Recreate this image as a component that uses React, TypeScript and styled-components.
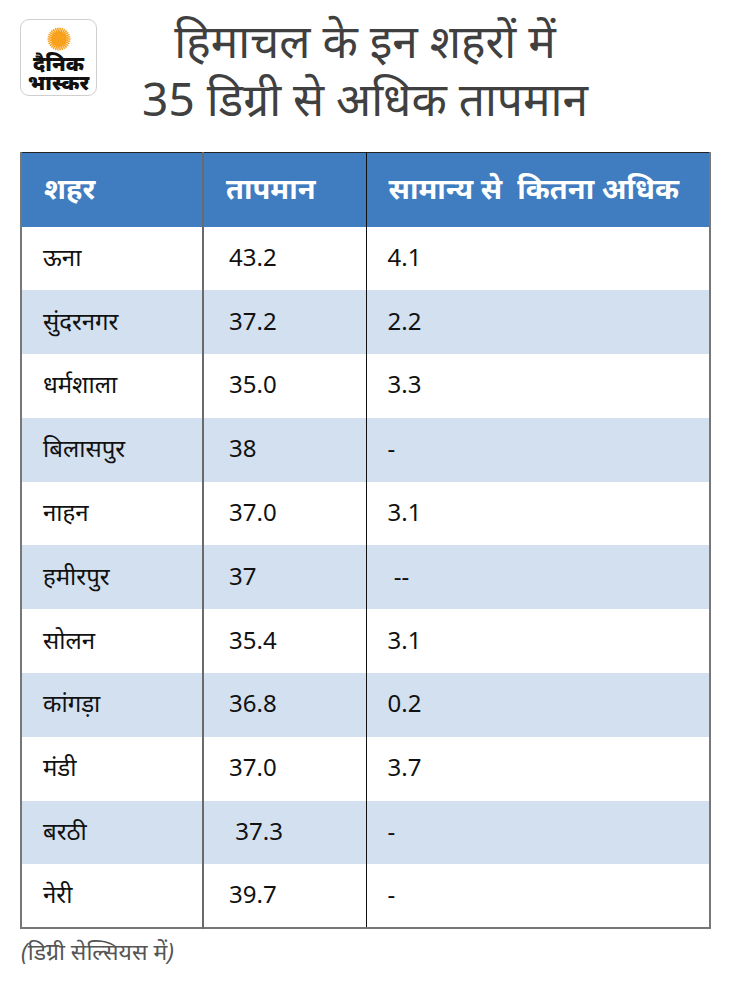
import React from "react";
import styled, { createGlobalStyle } from "styled-components";

const Global = createGlobalStyle`
  html, body { margin: 0; padding: 0; background: #ffffff; }
  body { width: 730px; font-family: "Noto Sans", "Noto Sans Devanagari", "Lohit Devanagari", sans-serif; }
`;

const Page = styled.div`
  width: 730px;
  height: 981px;
  background: #fff;
  overflow: hidden;
`;

const Header = styled.header`
  display: grid;
  grid-template-columns: 1fr auto 1fr;
  align-items: start;
  height: 152px;
  box-sizing: border-box;
`;

const LogoBox = styled.div`
  margin: 19px 0 0 20px;
  width: 77px;
  height: 77px;
  box-sizing: border-box;
  border: 1px solid #cfcfcf;
  border-radius: 9px;
  display: flex;
  flex-direction: column;
  align-items: center;
  padding-top: 7px;
`;

const LogoText = styled.div`
  font-weight: 900;
  font-size: 21px;
  color: #111;
  text-align: center;
  margin-top: 2px;
  display: flex;
  flex-direction: column;
  align-items: center;
`;

const LogoLine = styled.span<{ $small?: boolean }>`
  display: block;
  line-height: ${(p) => (p.$small ? 18 : 20)}px;
`;

const Title = styled.h1`
  margin: 11px 0 0;
  font-weight: 400;
  font-size: 46px;
  line-height: 58px;
  color: #404040;
  text-align: center;
  white-space: nowrap;
`;

const Table = styled.table`
  margin-left: 20px;
  width: 689px;
  border-collapse: collapse;
  table-layout: fixed;
  border-top: 1.5px solid #222;
  border-left: 2px solid #777;
  border-right: 2px solid #777;
  border-bottom: 2px solid #777;
`;

const HeadCell = styled.th<{ $w: number; $div?: string }>`
  width: ${(p) => p.$w}px;
  height: 74px;
  background: #3f7cc0;
  color: #fff;
  font-weight: 700;
  font-size: 29px;
  text-align: left;
  padding: 0 0 4px 22px;
  box-sizing: border-box;
  white-space: pre;
  border-right: ${(p) => p.$div ?? "none"};
`;

const Row = styled.tr<{ $alt: boolean }>`
  height: 63.8px;
  background: ${(p) => (p.$alt ? "#d3e0ef" : "#ffffff")};
`;

const Cell = styled.td<{ $div?: string; $pad?: number }>`
  font-size: 24px;
  color: #111;
  padding: 0 0 4px ${(p) => p.$pad ?? 21}px;
  border-right: ${(p) => p.$div ?? "none"};
  white-space: pre;
`;

const Note = styled.div`
  margin: 6px 0 0 21px;
  font-size: 23px;
  font-style: italic;
  color: #555;
`;

const rows: [string, string, string][] = [
  ["ऊना", "43.2", "4.1"],
  ["सुंदरनगर", "37.2", "2.2"],
  ["धर्मशाला", "35.0", "3.3"],
  ["बिलासपुर", "38", "-"],
  ["नाहन", "37.0", "3.1"],
  ["हमीरपुर", "37", " --"],
  ["सोलन", "35.4", "3.1"],
  ["कांगड़ा", "36.8", "0.2"],
  ["मंडी", "37.0", "3.7"],
  ["बरठी", " 37.3", "-"],
  ["नेरी", "39.7", "-"],
];

const Sun = () => {
  const rays = Array.from({ length: 30 }, (_, i) => {
    const a = (i / 30) * Math.PI * 2;
    const x1 = 12 + Math.cos(a) * 6;
    const y1 = 12 + Math.sin(a) * 6;
    const x2 = 12 + Math.cos(a) * 11.5;
    const y2 = 12 + Math.sin(a) * 11.5;
    return <line key={i} x1={x1} y1={y1} x2={x2} y2={y2} stroke="#f7a11c" strokeWidth={1.5} />;
  });
  return (
    <svg width="24" height="24" viewBox="0 0 24 24">
      <circle cx="12" cy="12" r="7.5" fill="#f7a11c" />
      {rays}
    </svg>
  );
};

export default function App() {
  const D1 = "2px solid #6a6a6a";
  const D2 = "1.5px solid #111";
  return (
    <Page>
      <Global />
      <Header>
        <div>
          <LogoBox>
            <Sun />
            <LogoText>
              <LogoLine>दैनिक</LogoLine>
              <LogoLine $small>भास्कर</LogoLine>
            </LogoText>
          </LogoBox>
        </div>
        <Title>
          हिमाचल के इन शहरों में
          <br />
          35 डिग्री से अधिक तापमान
        </Title>
        <div />
      </Header>
      <Table>
        <thead>
          <tr>
            <HeadCell $w={182} $div={D1}>शहर</HeadCell>
            <HeadCell $w={163} $div={D2}>तापमान</HeadCell>
            <HeadCell $w={344}>सामान्य से  कितना अधिक</HeadCell>
          </tr>
        </thead>
        <tbody>
          {rows.map((r, i) => (
            <Row key={i} $alt={i % 2 === 1}>
              <Cell $div={D1}>{r[0]}</Cell>
              <Cell $div={D2} $pad={25}>{r[1]}</Cell>
              <Cell>{r[2]}</Cell>
            </Row>
          ))}
        </tbody>
      </Table>
      <Note>(डिग्री सेल्सियस में)</Note>
    </Page>
  );
}
